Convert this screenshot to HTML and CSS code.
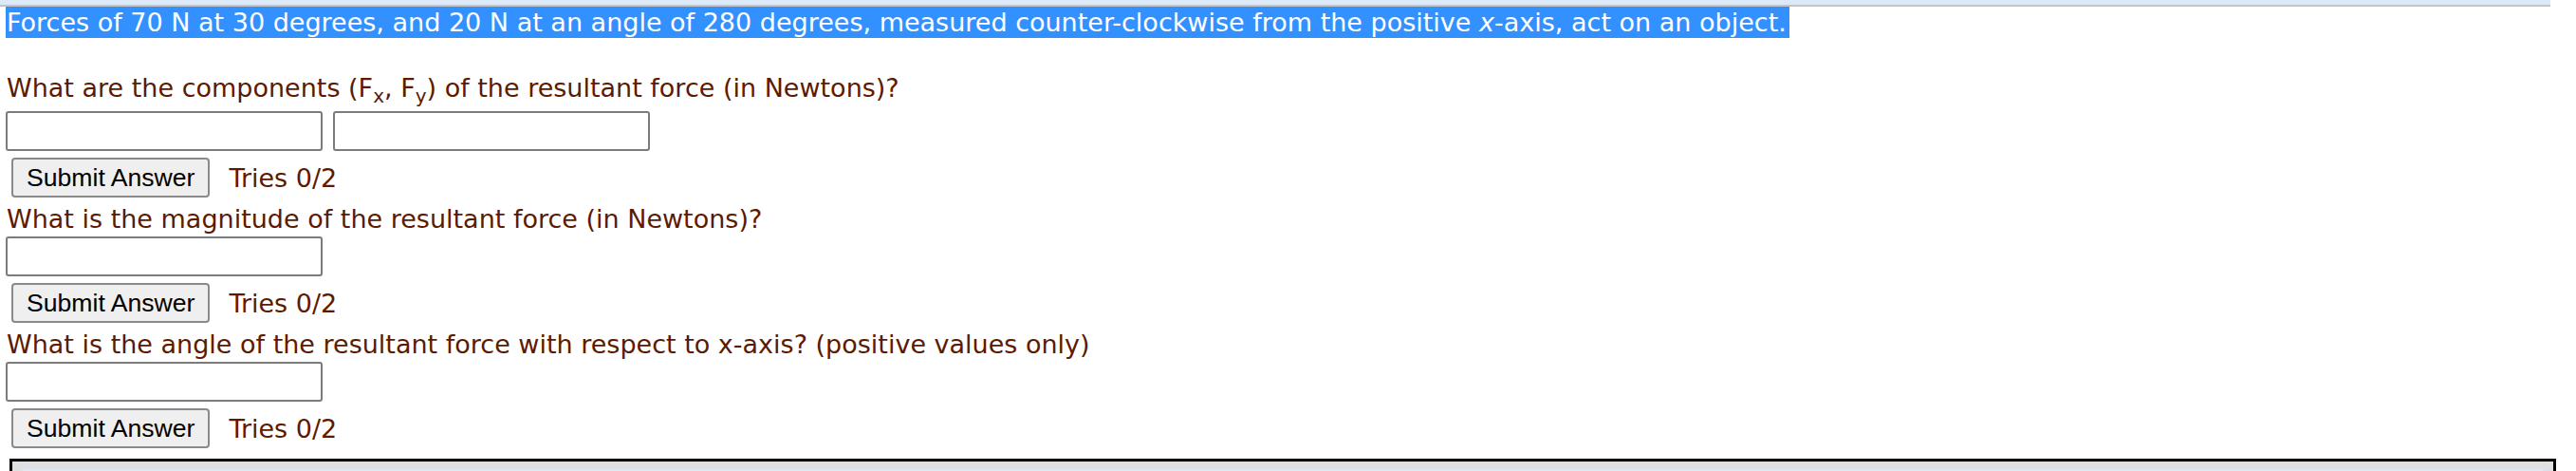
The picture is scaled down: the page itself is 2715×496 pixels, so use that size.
FILE: index.html
```html
<!DOCTYPE html>
<html lang="en">
<head>
<meta charset="utf-8">
<title>Resultant force</title>
<link rel="stylesheet" href="styles.css">
</head>
<body>
<div class="topbar"></div>
<p class="prompt"><span class="hl">Forces of 70 N at 30 degrees, and 20 N at an angle of 280 degrees, measured counter-clockwise from the positive <i>x</i>-axis, act on an object.</span></p>

<div class="block first">
  <div class="q">What are the components (F<sub>x</sub>, F<sub>y</sub>) of the resultant force (in Newtons)?</div>
  <div class="field"><input type="text" class="ans"><input type="text" class="ans"></div>
  <div class="submit-row"><button class="btn" type="button">Submit Answer</button><span class="tries">Tries 0/2</span></div>
</div>

<div class="block">
  <div class="q">What is the magnitude of the resultant force (in Newtons)?</div>
  <div class="field"><input type="text" class="ans"></div>
  <div class="submit-row"><button class="btn" type="button">Submit Answer</button><span class="tries">Tries 0/2</span></div>
</div>

<div class="block">
  <div class="q">What is the angle of the resultant force with respect to x-axis? (positive values only)</div>
  <div class="field"><input type="text" class="ans"></div>
  <div class="submit-row"><button class="btn" type="button">Submit Answer</button><span class="tries">Tries 0/2</span></div>
</div>

<div class="panel"><div class="panel-inner"></div></div>
</body>
</html>
```

FILE: styles.css
```css
html, body {
  margin: 0;
  padding: 0;
  height: 496px;
  overflow: hidden;
  background: #ffffff;
}

body {
  font-family: "DejaVu Sans", Verdana, sans-serif;
  font-size: 27px;
  color: #5c1a00;
}

.topbar {
  width: 2688px;
  height: 5px;
  background: #dbe9f9;
  border-bottom: 2px solid #c4c4c4;
}

.prompt {
  margin: 0;
  padding-left: 6px;
  line-height: 33px;
}

.hl {
  display: inline-block;
  background: #3391ff;
  color: #ffffff;
  padding-left: 1px;
  padding-right: 3px;
}

.hl i {
  font-style: italic;
}

.block {
  margin-top: 6px;
}

.block.first {
  margin-top: 36px;
}

.q {
  padding-left: 7px;
  line-height: 33px;
  white-space: nowrap;
}

.q sub {
  font-size: 20px;
  line-height: 0;
  vertical-align: -6px;
}

.field {
  display: flex;
  gap: 11px;
  padding-left: 6px;
  margin-top: 2px;
}

.block.first .field {
  margin-top: 8px;
}

.ans {
  box-sizing: border-box;
  width: 334px;
  height: 42px;
  margin: 0;
  border: 2px solid #7b7b7b;
  border-radius: 3px;
  background: #ffffff;
  font-family: "DejaVu Sans", sans-serif;
  font-size: 26px;
}

.submit-row {
  display: flex;
  align-items: center;
  gap: 20px;
  padding-left: 12px;
  margin-top: 7px;
}

.btn {
  box-sizing: border-box;
  height: 42px;
  margin: 0;
  padding: 0 14px;
  border: 2px solid #8a8a8a;
  border-radius: 4px;
  background: #efefef;
  color: #000000;
  font-family: "Liberation Sans", Arial, sans-serif;
  font-size: 26.6px;
  line-height: 38px;
}

.tries {
  line-height: 33px;
}

.panel {
  box-sizing: border-box;
  margin: 11px 21px 0 10px;
  height: 60px;
  border: 3px solid #000000;
  background: #e0e0e0;
  padding: 8px 10px 0;
}

.panel-inner {
  height: 40px;
  background: #dde9f7;
}
```
